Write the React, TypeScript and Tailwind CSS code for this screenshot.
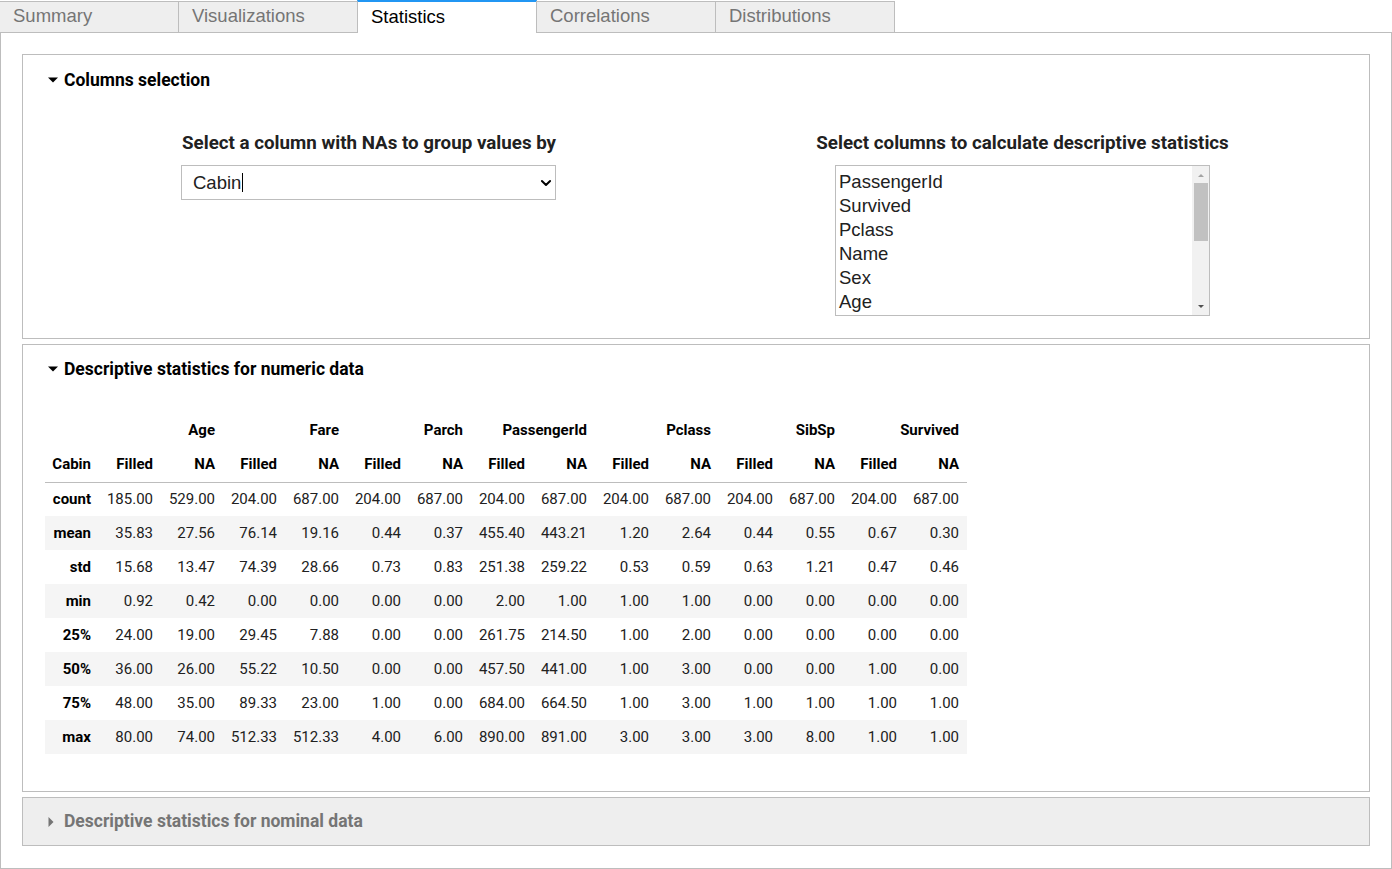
import React from "react";

const tabs = ["Summary", "Visualizations", "Statistics", "Correlations", "Distributions"];
const top = ["Age", "Fare", "Parch", "PassengerId", "Pclass", "SibSp", "Survived"];
const rows: [string, string[]][] = [
  ["count", ["185.00","529.00","204.00","687.00","204.00","687.00","204.00","687.00","204.00","687.00","204.00","687.00","204.00","687.00"]],
  ["mean", ["35.83","27.56","76.14","19.16","0.44","0.37","455.40","443.21","1.20","2.64","0.44","0.55","0.67","0.30"]],
  ["std", ["15.68","13.47","74.39","28.66","0.73","0.83","251.38","259.22","0.53","0.59","0.63","1.21","0.47","0.46"]],
  ["min", ["0.92","0.42","0.00","0.00","0.00","0.00","2.00","1.00","1.00","1.00","0.00","0.00","0.00","0.00"]],
  ["25%", ["24.00","19.00","29.45","7.88","0.00","0.00","261.75","214.50","1.00","2.00","0.00","0.00","0.00","0.00"]],
  ["50%", ["36.00","26.00","55.22","10.50","0.00","0.00","457.50","441.00","1.00","3.00","0.00","0.00","1.00","0.00"]],
  ["75%", ["48.00","35.00","89.33","23.00","1.00","0.00","684.00","664.50","1.00","3.00","1.00","1.00","1.00","1.00"]],
  ["max", ["80.00","74.00","512.33","512.33","4.00","6.00","890.00","891.00","3.00","3.00","3.00","8.00","1.00","1.00"]],
];

function Down() {
  return (
    <svg width="10" height="10" viewBox="0 0 10 10" className="mr-[6px]">
      <path d="M0 2.5 L10 2.5 L5 7.5 Z" fill="#000" />
    </svg>
  );
}
function Right() {
  return (
    <svg width="10" height="10" viewBox="0 0 10 10" className="mr-[8px] -ml-[2px]">
      <path d="M2.5 0 L7.5 5 L2.5 10 Z" fill="#757575" />
    </svg>
  );
}

export default function App() {
  const roboto = { fontFamily: "Roboto, 'Noto Sans', sans-serif" };
  const arial = { fontFamily: "'Liberation Sans', Arial, sans-serif" };
  return (
    <div className="w-[1392px] h-[869px] bg-white overflow-hidden" style={roboto}>
      {/* tabs */}
      <div className="flex h-[33px] relative z-10">
        {tabs.map((t) =>
          t === "Statistics" ? (
            <div key={t} className="w-[180px] h-[33px] bg-white border-t-2 border-[#2196f3] border-x border-x-[#bdbdbd] -ml-px flex items-center pl-[13px] pb-px text-[18.5px] text-black" style={arial}>
              {t}
            </div>
          ) : (
            <div key={t} className="w-[180px] h-[32px] mt-px bg-[#eeeeee] border border-[#bdbdbd] -ml-px flex items-center pl-[13px] pb-[2px] text-[18.5px] text-[#757575]" style={arial}>
              {t}
            </div>
          )
        )}
      </div>
      {/* content */}
      <div className="-mt-px w-[1392px] h-[837px] border border-[#bdbdbd] px-[21px] pt-[21px] flex flex-col gap-[5px]">
        {/* panel 1 */}
        <div className="border border-[#bdbdbd] h-[285px]">
          <div className="flex items-center pl-[25px] pt-[14px] h-[36px] text-[17.5px] font-bold text-black">
            <Down />
            Columns selection
          </div>
          <div className="flex pl-[158px] pt-[40px]">
            <div className="w-[375px] flex flex-col">
              <div className="pl-px text-[18.75px] font-bold text-[#212121] leading-[24px] whitespace-nowrap">Select a column with NAs to group values by</div>
              <div className="mt-[10px] h-[35px] border border-[#bdbdbd] flex items-center pl-[11px] pr-[2px] text-[18.5px] text-[#212121]" style={arial}>
                <span>Cabin</span>
                <span className="w-px h-[19px] bg-black ml-px"></span>
                <span className="flex-1"></span>
                <svg width="14" height="14" viewBox="0 0 24 24" fill="none" stroke="#000" strokeWidth="3.4" strokeLinecap="round" strokeLinejoin="round"><path d="M5 8.5l7 7 7-7" /></svg>
              </div>
            </div>
            <div className="w-[375px] ml-[279px] flex flex-col items-center">
              <div className="text-[18.75px] font-bold text-[#212121] leading-[24px] whitespace-nowrap">Select columns to calculate descriptive statistics</div>
              <div className="mt-[10px] w-[375px] h-[151px] border border-[#bdbdbd] flex text-[18.5px] text-[#212121]" style={arial}>
                <div className="flex-1 pl-[3px] pt-[4px] leading-[23.9px] overflow-hidden">
                  {["PassengerId", "Survived", "Pclass", "Name", "Sex", "Age"].map((x) => (
                    <div key={x}>{x}</div>
                  ))}
                </div>
                <div className="w-[17px] bg-[#f1f1f1] flex flex-col items-center">
                  <svg width="8" height="14" viewBox="0 0 8 14" className="mt-[2px]"><path d="M1 9 L4 6 L7 9 Z" fill="#a3a3a3" /></svg>
                  <div className="w-[14px] h-[58px] bg-[#c1c1c1] mt-[1px]"></div>
                  <div className="flex-1"></div>
                  <svg width="8" height="14" viewBox="0 0 8 14" className="mb-[2px]"><path d="M1 6 L4 9 L7 6 Z" fill="#505050" /></svg>
                </div>
              </div>
            </div>
          </div>
        </div>
        {/* panel 2 */}
        <div className="border border-[#bdbdbd] h-[448px]">
          <div className="flex items-center pl-[25px] pt-[12px] h-[36px] text-[17.5px] font-bold text-black">
            <Down />
            Descriptive statistics for numeric data
          </div>
          <div className="pl-[22px] pt-[32px]">
            <table className="border-collapse text-[15px] text-[#212121]">
              <thead>
                <tr className="h-[34px]">
                  <th className="w-[54px]"></th>
                  {top.map((t) => (
                    <th key={t} colSpan={2} className="text-right font-bold text-black pr-[8px]">{t}</th>
                  ))}
                </tr>
                <tr className="h-[35px] border-b border-[#bdbdbd]">
                  <th className="w-[54px] text-right pr-[8px] font-bold text-black">Cabin</th>
                  {top.map((t) => (
                    <React.Fragment key={t}>
                      <th className="w-[62px] text-right pr-[8px] font-bold text-black">Filled</th>
                      <th className="w-[62px] text-right pr-[8px] font-bold text-black">NA</th>
                    </React.Fragment>
                  ))}
                </tr>
              </thead>
              <tbody>
                {rows.map(([k, vals], i) => (
                  <tr key={k} className={`h-[34px] ${i % 2 === 1 ? "bg-[#f5f5f5]" : ""}`}>
                    <th className="text-right pr-[8px] font-bold text-black">{k}</th>
                    {vals.map((v, j) => (
                      <td key={j} className="text-right pr-[8px]">{v}</td>
                    ))}
                  </tr>
                ))}
              </tbody>
            </table>
          </div>
        </div>
        {/* panel 3 */}
        <div className="border border-[#bdbdbd] h-[49px] bg-[#eeeeee] flex items-center pl-[25px] text-[17.5px] font-bold text-[#757575]">
          <Right />
          Descriptive statistics for nominal data
        </div>
      </div>
    </div>
  );
}
